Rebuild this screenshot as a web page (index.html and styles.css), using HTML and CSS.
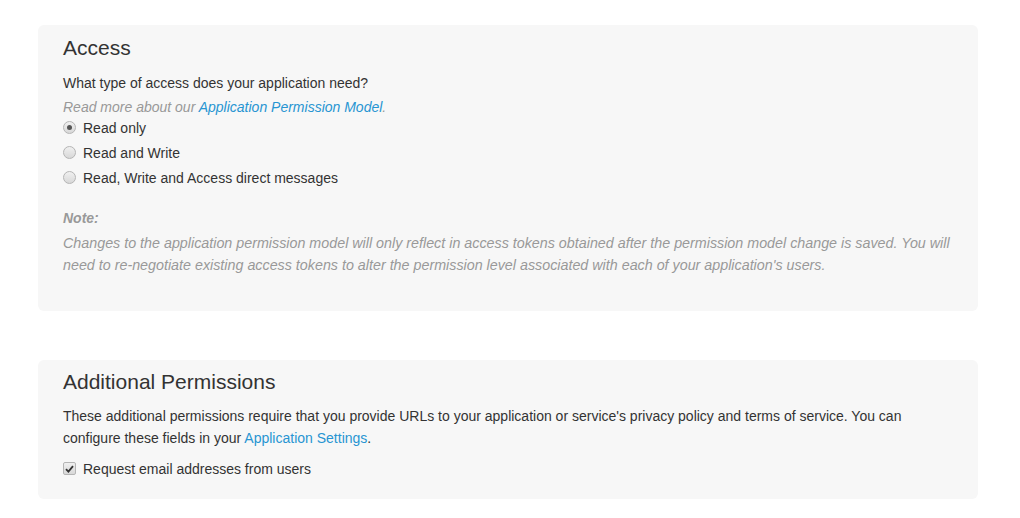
FILE: index.html
```html
<!DOCTYPE html>
<html lang="en">
<head>
    <meta charset="UTF-8">
    <title>Permissions</title>
    <link rel="stylesheet" href="styles.css">
</head>
<body>
    <section class="panel">
        <h2>Access</h2>
        <p class="question">What type of access does your application need?</p>
        <p class="hint">Read more about our <a href="#">Application Permission Model</a>.</p>

        <label class="choice"><span class="radio checked"></span>Read only</label>
        <label class="choice"><span class="radio"></span>Read and Write</label>
        <label class="choice"><span class="radio"></span>Read, Write and Access direct messages</label>

        <p class="note-title">Note:</p>
        <p class="note">Changes to the application permission model will only reflect in access tokens obtained after the permission model change is saved. You will need to re-negotiate existing access tokens to alter the permission level associated with each of your application's users.</p>
    </section>

    <section class="panel panel-small">
        <h2>Additional Permissions</h2>
        <p class="intro">These additional permissions require that you provide URLs to your application or service's privacy policy and terms of service. You can configure these fields in your <a href="#">Application Settings</a>.</p>

        <label class="choice"><span class="checkbox">
            <svg width="9" height="8" viewBox="0 0 9 8"><path d="M1 4.2 L3.4 6.6 L8 1.2" fill="none" stroke="#333" stroke-width="1.8"/></svg>
        </span>Request email addresses from users</label>
    </section>
</body>
</html>
```

FILE: styles.css
```css
body {
    font-family: 'Liberation Sans', Arial, sans-serif;
    font-size: 14px;
    color: #333;
    background-color: #fff;
    margin: 0;
    padding: 25px 42px 0 38px;
}

.panel {
    background-color: #f7f7f7;
    border-radius: 6px;
    padding: 12px 25px 35px;
    margin-bottom: 49px;
}

.panel-small {
    padding-top: 11px;
    padding-bottom: 18px;
    margin-bottom: 0;
}

h2 {
    margin: 0;
    font-size: 21px;
    font-weight: normal;
    line-height: 22px;
}

p {
    margin: 0;
}

a {
    color: #2795d2;
    text-decoration: none;
}

.question {
    margin-top: 14px;
    line-height: 20px;
}

.hint {
    margin: 5px 0 -1px;
    line-height: 18px;
    font-style: italic;
    color: #999;
}

.choice {
    display: flex;
    align-items: center;
    height: 25px;
}

.radio {
    width: 11px;
    height: 11px;
    border: 1px solid #b5b5b5;
    border-radius: 50%;
    background: linear-gradient(#f0f0f0, #d8d8d8);
    margin-right: 7px;
    display: flex;
    align-items: center;
    justify-content: center;
}

.radio.checked::after {
    content: "";
    width: 5px;
    height: 5px;
    border-radius: 50%;
    background-color: #555;
}

.checkbox {
    width: 11px;
    height: 11px;
    border: 1px solid #b5b5b5;
    border-radius: 2px;
    background: linear-gradient(#f0f0f0, #d8d8d8);
    margin-right: 7px;
    display: flex;
    align-items: center;
    justify-content: center;
}

.note-title {
    margin-top: 17px;
    line-height: 22px;
    font-weight: bold;
    font-style: italic;
    color: #999;
}

.note {
    margin-top: 3px;
    line-height: 22px;
    font-size: 14.3px;
    font-style: italic;
    color: #999;
}

.intro {
    margin-top: 12px;
    line-height: 22px;
}

.intro + .choice {
    margin-top: 7px;
}
```
